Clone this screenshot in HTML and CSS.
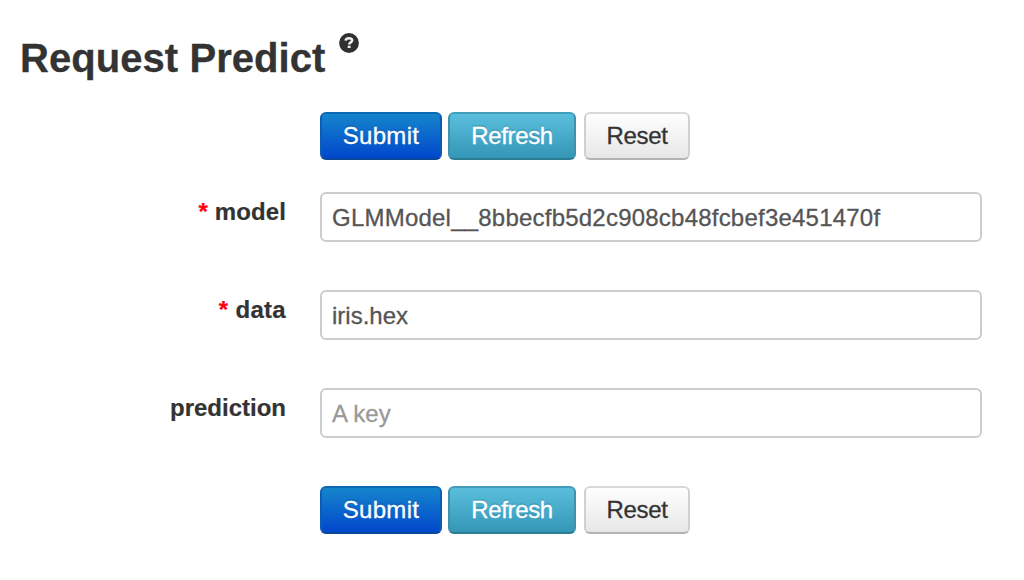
FILE: index.html
```html
<!DOCTYPE html>
<html lang="en">
<head>
<meta charset="utf-8">
<title>Request Predict</title>
<link rel="stylesheet" href="styles.css">
</head>
<body>
<header class="heading">
  <h1 class="title">Request Predict</h1>
  <svg class="help" viewBox="0 0 20 20" aria-label="Help"><circle cx="10" cy="10" r="9.9" fill="#303030"/><path d="M6.6 7.6C6.8 5.8 8.2 5.2 10 5.2c2 0 3.2.8 3.2 2.3 0 2-3 1.8-3 3.9" fill="none" stroke="#eee" stroke-width="2.5"/><path d="M8.7 12.7h2.9v2.3H8.7z" fill="#eee"/></svg>
</header>
<form class="form">
  <div class="actions">
    <button class="btn primary" type="button">Submit</button>
    <button class="btn info" type="button">Refresh</button>
    <button class="btn reset" type="button">Reset</button>
  </div>
  <div class="row">
    <label class="label model" for="model"><span class="required">*</span> model</label>
    <input class="field key" id="model" type="text" value="GLMModel__8bbecfb5d2c908cb48fcbef3e451470f">
  </div>
  <div class="row">
    <label class="label data" for="data"><span class="required">*</span> data</label>
    <input class="field" id="data" type="text" value="iris.hex">
  </div>
  <div class="row">
    <label class="label prediction" for="prediction">prediction</label>
    <input class="field" id="prediction" type="text" placeholder="A key">
  </div>
  <div class="actions">
    <button class="btn primary" type="button">Submit</button>
    <button class="btn info" type="button">Refresh</button>
    <button class="btn reset" type="button">Reset</button>
  </div>
</form>
</body>
</html>
```
FILE: styles.css
```css
* { box-sizing: border-box; }
body {
  margin: 0;
  padding: 32px 42px 0 20px;
  background: #fff;
  color: #333;
  font-family: "Liberation Sans", Arial, sans-serif;
  font-size: 24px;
}
.heading { display: flex; height: 80px; }
.title { width: 305px; margin: 0; font-size: 40px; line-height: 52px; letter-spacing: 0.06px; white-space: nowrap; -webkit-text-stroke: 0.3px; }
.help { width: 20px; height: 20px; margin: 1px 0 0 14px; }
.form { display: flex; flex-direction: column; }
.actions { display: flex; height: 48px; margin-left: 300px; margin-bottom: 32px; }
.btn {
  height: 48px;
  padding: 0 0 1px;
  border: 2px solid;
  border-radius: 6px;
  font: 24px "Liberation Sans", Arial, sans-serif;
  color: #fff;
  white-space: nowrap;
  -webkit-text-stroke: 0.3px;
}
.primary {
  width: 122px;
  margin-right: 6px;
  background: linear-gradient(#1688cc, #0044cc) border-box;
  border-color: #0d68b4 #0d5cb4 #0a4798;
  letter-spacing: 0.3px;
  text-shadow: 0 -2px 0 rgba(0, 0, 0, 0.1);
}
.info {
  width: 128px;
  margin-right: 8px;
  background: linear-gradient(#5bc0de, #3395b5) border-box;
  border-color: #429eb8 #3d93ac #2c7c93;
  letter-spacing: -0.35px;
  text-shadow: 0 -2px 0 rgba(0, 0, 0, 0.1);
}
.reset {
  width: 106px;
  background: linear-gradient(#fff, #e6e6e6) border-box;
  border-color: #d9d9d9 #d0d0d0 #b3b3b3;
  color: #333;
  letter-spacing: -0.3px;
}
.row { display: flex; justify-content: space-between; height: 50px; margin-bottom: 48px; }
.label { width: 266px; line-height: 40px; text-align: right; font-weight: bold; white-space: nowrap; -webkit-text-stroke: 0.2px; }
.model { letter-spacing: 0.1px; }
.data { letter-spacing: 0.3px; }
.required { color: #f01; }
.field {
  width: 662px;
  height: 50px;
  padding: 2px 10px 0;
  border: 2px solid #ccc;
  border-radius: 6px;
  background: #fff;
  color: #555;
  font: 24px "Liberation Sans", Arial, sans-serif;
  -webkit-text-stroke: 0.3px;
}
.key { letter-spacing: 0.22px; }
.field::placeholder { color: #999; opacity: 1; }
```
